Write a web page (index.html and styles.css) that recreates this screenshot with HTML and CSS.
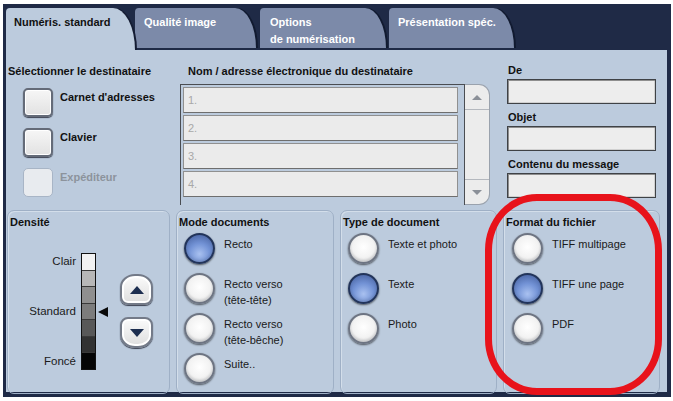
FILE: index.html
```html
<!DOCTYPE html>
<html lang="fr">
<head>
    <meta charset="UTF-8">
    <meta name="viewport" content="width=device-width, initial-scale=1.0">
    <title>Numérisation vers e-mail</title>
    <link rel="stylesheet" href="styles.css">
</head>
<body>
    <div class="screen">
        <div class="frame">
            <div class="tabs">
                <div class="tab active">Numéris. standard</div>
                <div class="tab t2">Qualité image</div>
                <div class="tab t3">Options<br>de numérisation</div>
                <div class="tab t4">Présentation spéc.</div>
            </div>

            <div class="panel">
                <div class="top">
                    <div class="dest">
                        <div class="heading">Sélectionner le destinataire</div>
                        <div class="pick"><span class="sq"></span><span class="pick-label">Carnet d'adresses</span></div>
                        <div class="pick"><span class="sq"></span><span class="pick-label">Clavier</span></div>
                        <div class="pick off"><span class="sq"></span><span class="pick-label">Expéditeur</span></div>
                    </div>

                    <div class="addr">
                        <div class="heading">Nom / adresse électronique du destinataire</div>
                        <div class="listbox">
                            <div class="rows">
                                <div class="row">1.</div>
                                <div class="row">2.</div>
                                <div class="row">3.</div>
                                <div class="row">4.</div>
                            </div>
                            <div class="scroll">
                                <div class="sc-btn"><span class="tri-up"></span></div>
                                <div class="sc-track"></div>
                                <div class="sc-btn"><span class="tri-down"></span></div>
                            </div>
                        </div>
                    </div>

                    <div class="msg">
                        <div class="heading">De</div>
                        <div class="field"></div>
                        <div class="heading">Objet</div>
                        <div class="field"></div>
                        <div class="heading">Contenu du message</div>
                        <div class="field"></div>
                    </div>
                </div>

                <div class="groups">
                    <div class="group">
                        <div class="heading">Densité</div>
                        <div class="density">
                            <div class="scale-labels">
                                <span>Clair</span>
                                <span>Standard</span>
                                <span>Foncé</span>
                            </div>
                            <div class="scale">
                                <span class="c1"></span><span class="c2"></span><span class="c3"></span>
                                <span class="c4"></span><span class="c5"></span><span class="c6"></span>
                                <span class="c7"></span>
                            </div>
                            <div class="marker"><span class="tri-left"></span></div>
                            <div class="steppers">
                                <div class="step up"><span class="arrow-up"></span></div>
                                <div class="step down"><span class="arrow-down"></span></div>
                            </div>
                        </div>
                    </div>

                    <div class="group">
                        <div class="heading">Mode documents</div>
                        <div class="option"><span class="radio on"></span><span class="opt-label">Recto</span></div>
                        <div class="option"><span class="radio"></span><span class="opt-label">Recto verso<br>(tête-tête)</span></div>
                        <div class="option"><span class="radio"></span><span class="opt-label">Recto verso<br>(tête-bêche)</span></div>
                        <div class="option"><span class="radio"></span><span class="opt-label">Suite..</span></div>
                    </div>

                    <div class="group">
                        <div class="heading">Type de document</div>
                        <div class="option"><span class="radio"></span><span class="opt-label">Texte et photo</span></div>
                        <div class="option"><span class="radio on"></span><span class="opt-label">Texte</span></div>
                        <div class="option"><span class="radio"></span><span class="opt-label">Photo</span></div>
                    </div>

                    <div class="group last">
                        <div class="heading">Format du fichier</div>
                        <div class="option"><span class="radio"></span><span class="opt-label">TIFF multipage</span></div>
                        <div class="option"><span class="radio on"></span><span class="opt-label">TIFF une page</span></div>
                        <div class="option"><span class="radio"></span><span class="opt-label">PDF</span></div>
                    </div>
                </div>
            </div>
        </div>

        <div class="ring"></div>
    </div>
</body>
</html>
```

FILE: styles.css
```css
body {
    margin: 0;
    background-color: #ffffff;
    font-family: 'Liberation Sans', Arial, sans-serif;
    color: #111;
}

.screen {
    position: relative;
    width: 673px;
    height: 401px;
    overflow: hidden;
}

.frame {
    margin: 4px 0 0 3px;
    width: 668px;
    padding: 4px 4px 5px 3px;
    box-sizing: border-box;
    background-color: #1f2a46;
}

/* Tabs */

.tabs {
    display: flex;
    align-items: flex-start;
    height: 42px;
}

.tab {
    height: 40px;
    box-sizing: border-box;
    padding: 6px 0 0 9px;
    background-color: #7c8aa9;
    color: #ffffff;
    font-size: 11px;
    font-weight: bold;
    line-height: 17px;
    border-radius: 4px 22px 0 0 / 4px 42px 0 0;
    box-shadow: 2px 0 0 #111a30;
}

.tab.active {
    width: 129px;
    height: 42px;
    padding-left: 8px;
    background-color: #bccbdd;
    color: #111;
    box-shadow: 2px 0 0 #141c33;
    position: relative;
    z-index: 1;
}

.t2 { width: 121px; }
.t3 { width: 126px; margin-left: 4px; padding-left: 10px; }
.t4 { width: 125px; margin-left: 3px; }

/* Main panel */

.panel {
    height: 342px;
    background-color: #bccbdd;
}

.heading {
    font-size: 11px;
    font-weight: bold;
    line-height: 12px;
    color: #111;
    white-space: nowrap;
}

.top {
    display: grid;
    grid-template-columns: 174px 325px 162px;
    height: 160px;
    padding-top: 15px;
    box-sizing: border-box;
}

.dest {
    padding-left: 2px;
}

.dest .heading {
    margin-bottom: 11px;
}

.pick {
    display: flex;
    align-items: flex-start;
    gap: 7px;
    padding-left: 15px;
    margin-bottom: 11px;
}

.pick.off {
    margin-top: 2px;
}

.sq {
    width: 30px;
    height: 29px;
    box-sizing: border-box;
    border: 2px solid #646b78;
    border-radius: 5px;
    background: linear-gradient(#f6f6f6, #e2e2e2);
    box-shadow: 0 1px 1px #3b4150, inset 0 0 0 1px #ffffff;
}

.pick-label {
    padding-top: 3px;
    font-size: 11px;
    font-weight: bold;
    line-height: 12px;
}

.pick.off .sq {
    border: 1px solid #a8b5c6;
    background: #e8ebef;
    box-shadow: none;
}

.pick.off .pick-label {
    color: #8c939c;
}

/* Address list */

.addr .heading {
    padding-left: 8px;
    margin-bottom: 7px;
}

.listbox {
    display: flex;
    width: 310px;
    height: 121px;
}

.rows {
    width: 285px;
    box-sizing: border-box;
    border: 1px solid #4a4d52;
    border-bottom: none;
    padding: 2px 6px 0 2px;
    display: flex;
    flex-direction: column;
    gap: 2px;
}

.row {
    height: 26px;
    box-sizing: border-box;
    border: 1px solid #909090;
    border-bottom-color: #6e6e6e;
    background-color: #ebebeb;
    padding: 6px 0 0 4px;
    font-size: 11px;
    line-height: 12px;
    color: #a8a8a8;
}

.scroll {
    width: 25px;
    box-sizing: border-box;
    border: 1px solid #9aa2ad;
    border-left: none;
    border-radius: 0 11px 11px 0;
    background-color: #ececec;
    display: flex;
    flex-direction: column;
}

.sc-btn {
    height: 24px;
    display: flex;
    align-items: center;
    justify-content: center;
}

.sc-track {
    flex: 1;
    border-top: 1px solid #b4b8be;
    border-bottom: 1px solid #b4b8be;
}

.tri-up, .tri-down {
    width: 0;
    height: 0;
    border-left: 5px solid transparent;
    border-right: 5px solid transparent;
}

.tri-up { border-bottom: 5px solid #8b9098; }
.tri-down { border-top: 5px solid #8b9098; }

/* Message fields */

.msg .heading {
    padding-left: 3px;
    margin-top: -1px;
}

.field {
    width: 149px;
    height: 25px;
    margin: 3px 0 8px 2px;
    box-sizing: border-box;
    border: 1px solid #3f4246;
    background-color: #ededed;
    box-shadow: inset 1px 1px 0 #8e8e8e, inset -1px -1px 0 #d0d0d0;
}

/* Lower groups */

.groups {
    display: grid;
    grid-template-columns: 163px 158px 157px 157px;
    column-gap: 6px;
    padding-left: 1px;
    height: 176px;
}

.group {
    border: 1px solid #9fb0c6;
    border-radius: 7px;
    box-shadow: inset 1px 1px 0 #d3deea;
    padding: 5px 0 0 2px;
}

.group .heading {
    margin-bottom: 5px;
}

.option {
    display: flex;
    align-items: flex-start;
    gap: 9px;
    height: 40px;
    padding-left: 5px;
}

.group.last .option {
    padding-left: 6px;
}

.radio {
    flex: none;
    width: 31px;
    height: 31px;
    box-sizing: border-box;
    border-radius: 50%;
    border: 2px solid #6d7482;
    background: radial-gradient(circle at 50% 45%, #ffffff 0%, #f2f2f2 55%, #c3c6cb 100%);
    box-shadow: 0 1px 2px rgba(0, 0, 0, 0.6), inset 0 -2px 3px rgba(0, 0, 0, 0.12);
}

.radio.on {
    border-color: #22345a;
    background: radial-gradient(circle at 50% 70%, #a9c1f0 0%, #7393d6 45%, #3e5896 100%);
}

.opt-label {
    padding-top: 3px;
    font-size: 11px;
    line-height: 16px;
    color: #1a1a1a;
}

/* Density scale */

.density {
    display: flex;
    align-items: flex-start;
    margin-top: 25px;
}

.scale-labels {
    width: 66px;
    height: 117px;
    display: flex;
    flex-direction: column;
    justify-content: space-between;
    align-items: flex-end;
    font-size: 11.5px;
    line-height: 17px;
    color: #1a1a1a;
}

.scale {
    margin-left: 5px;
    width: 15px;
    height: 117px;
    box-sizing: border-box;
    border: 1px solid #111;
    display: flex;
    flex-direction: column;
}

.scale span {
    flex: 1;
    border-bottom: 1px solid #3a3a3a;
}

.scale span:last-child { border-bottom: none; }

.c1 { background-color: #f2f2f2; }
.c2 { background-color: #b7b7b7; }
.c3 { background-color: #8f8f8f; }
.c4 { background-color: #7c7c7c; }
.c5 { background-color: #585858; }
.c6 { background-color: #323232; }
.c7 { background-color: #050505; }

.marker {
    height: 117px;
    display: flex;
    align-items: center;
    margin-left: 2px;
}

.tri-left {
    width: 0;
    height: 0;
    border-top: 5px solid transparent;
    border-bottom: 5px solid transparent;
    border-right: 10px solid #0a0a0a;
}

.steppers {
    margin-left: 12px;
    padding-top: 21px;
    display: flex;
    flex-direction: column;
    gap: 12px;
}

.step {
    width: 33px;
    height: 31px;
    box-sizing: border-box;
    border: 2px solid #737a88;
    background: linear-gradient(#fbfbfb, #dedede);
    box-shadow: 0 1px 1px #3a4050, inset 0 0 0 2px #ffffff;
    display: flex;
    align-items: center;
    justify-content: center;
}

.step.up { border-radius: 15px 15px 8px 8px / 13px 13px 8px 8px; }
.step.down { border-radius: 8px 8px 15px 15px / 8px 8px 13px 13px; }

.arrow-up, .arrow-down {
    width: 0;
    height: 0;
    border-left: 7px solid transparent;
    border-right: 7px solid transparent;
}

.arrow-up { border-bottom: 8px solid #1d2e50; }
.arrow-down { border-top: 8px solid #1d2e50; }

/* Red highlight drawn over the file format group */

.ring {
    position: absolute;
    left: 485px;
    top: 194px;
    width: 177px;
    height: 201px;
    box-sizing: border-box;
    border: 7px solid #e8131b;
    border-radius: 52px / 56px;
}
```
